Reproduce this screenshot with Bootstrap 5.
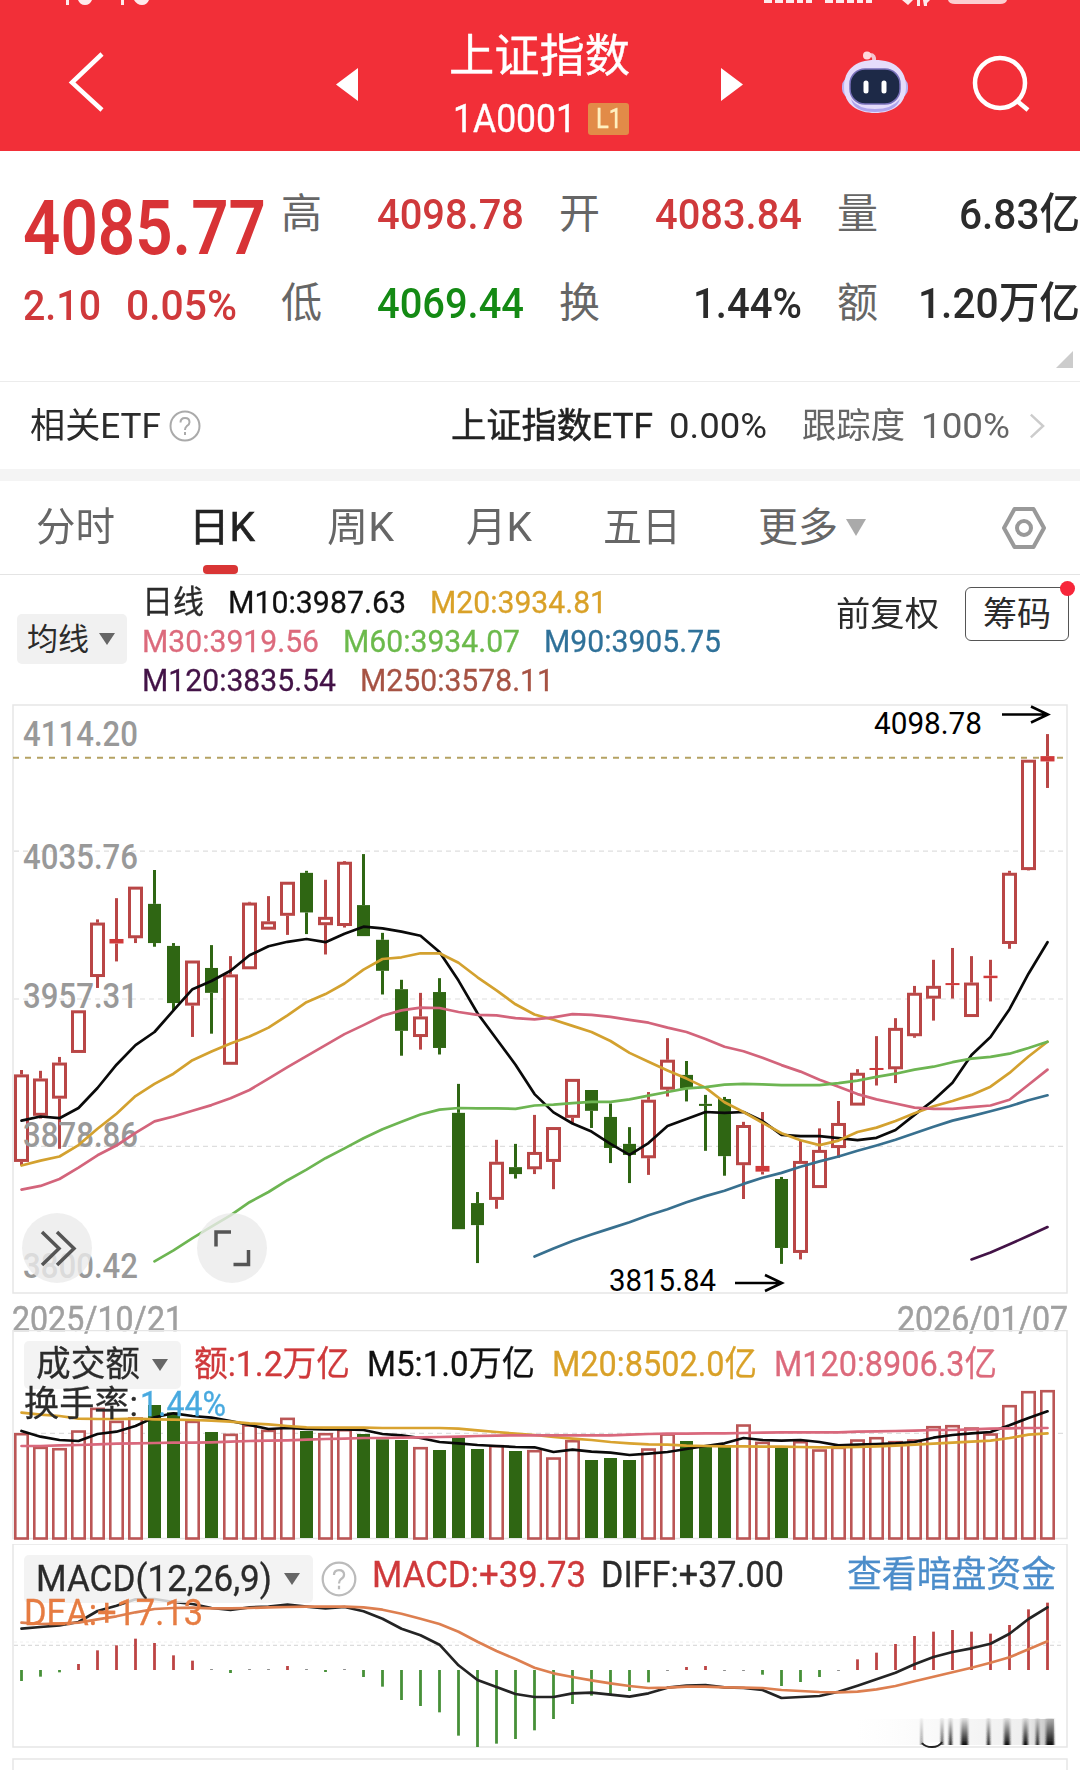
<!DOCTYPE html>
<html lang="zh-CN">
<head>
<meta charset="utf-8">
<meta name="viewport" content="width=device-width, initial-scale=1">
<title>上证指数 1A0001</title>
<link href="https://cdn.jsdelivr.net/npm/bootstrap@5.3.0/dist/css/bootstrap.min.css" rel="stylesheet">
<style>
  body { width:1080px; height:1770px; overflow:hidden; background:#fff; color:#2b2b2b; font-family:Roboto,"Noto Sans CJK SC",sans-serif; line-height:1; }
  svg { display:block; flex:none; }
  .fit { display:inline-block; white-space:nowrap; line-height:1; flex:none; }
  .fit > span { display:inline-block; transform-origin:0 50%; }
  .c-red { color:#cf393b; } .c-green { color:#148a14; } .c-gray { color:#666; }
  .c-gold { color:#d9a128; } .c-pink { color:#dc6a7c; } .c-lime { color:#6cba4c; } .c-blue { color:#2f7199; }
  .c-plum { color:#431347; } .c-brown { color:#a65344; } .c-sky { color:#48a9df; } .c-orange { color:#e67c42; } .c-link { color:#4c8dca; } .c-ink { color:#111; }
  .topbar { height:151px; background:#f22f38; color:#fff; }
  .topbar .titles { left:445px; top:33px; width:190px; }
  .topbar .name { font-size:45px; height:52px; line-height:48px; -webkit-text-stroke:.4px currentColor; }
  .topbar .code { font-size:38px; height:38px; margin-top:15px; gap:12px; -webkit-text-stroke:.4px currentColor; }
  .lv { width:41px; height:32px; border-radius:3px; background:#e28b48; color:#fff0c0; font-size:28px; }
  .quote { height:230px; }
  .lead-col { width:281px; padding-left:23px; }
  .price { font-size:76px; color:#d83336; font-weight:600; height:76px; margin-top:39px; }
  .delta { font-size:43px; font-weight:500; gap:25px; margin-top:18px; height:43px; }
  .grid-col { width:799px; padding-top:35px; }
  .pairs { gap:35px; height:57px; font-size:43px; font-weight:500; }
  .pairs + .pairs { margin-top:32px; }
  .pair { width:243.5px; } .pair .tag { font-size:41px; font-weight:400; color:#666; }
  .corner { right:7px; bottom:13px; border-left:17px solid transparent; border-bottom:17px solid #ccc; }
  .etf { height:88px; border-top:1px solid #ececec; padding-left:30px; padding-top:1px; font-size:35px; }
  .etf .fund { color:#222; -webkit-text-stroke:.5px currentColor; }
  .band { height:12px; background:#f4f4f4; }
  .tabs { height:94px; border-bottom:1px solid #e4e4e4; font-size:40px; color:#666; padding-left:36px; }
  .tabs .active-tab { color:#222; -webkit-text-stroke:.6px currentColor; }
  .tabs .active-tab::after { content:""; position:absolute; left:14px; top:57px; width:35px; height:9px; border-radius:4px; background:#d93535; }
  .cog { margin-right:33px; }
  .tri { display:inline-block; border:8px solid transparent; border-top:12px solid #666; border-bottom:0; flex:none; }
  .tri-lg { border-width:17px 10px 0; border-top-color:#aaa; }
  .legend { height:130px; }
  .pill { background:#f1f1f1; border-radius:5px; }
  .legend .pill { width:110px; height:50px; margin:39px 0 0 17px; font-size:31px; padding-left:10px; gap:10px; }
  .ma { margin:7px 0 0 15px; width:580px; font-size:32px; -webkit-text-stroke:.3px currentColor; } .ma > div { height:39px; gap:24px; }
  .adj { font-size:34px; margin:22px 0 0 114px; }
  .chip { width:104px; height:54px; border:1.5px solid #555; border-radius:6px; margin:12px 0 0 26px; font-size:34px; }
  .chip i { right:-7px; top:-7px; width:15px; height:15px; border-radius:50%; background:#f7263a; }
  .panel-k { height:588px; }
  .dates { height:37px; padding:9px 12px 0 12px; font-size:35px; color:#a0a0a0; -webkit-text-stroke:.5px currentColor; }
  .panel-v { height:214px; } .panel-m { height:216px; }
  .over { position:absolute; left:24px; top:11px; width:1044px; }
  .over .pill { height:48px; background:rgba(240,240,240,.82); }
  .pill-v { width:157px; } .pill-m { width:289px; }
  .panel-v .over { font-size:35px; -webkit-text-stroke:.3px currentColor; } .panel-m .over { font-size:36px; -webkit-text-stroke:.3px currentColor; }
  .second-v { margin-top:-1px; } .second-m { margin-top:-8px; }
  .panel-v .over .fit { position:relative; top:-1px; }
  svg text { font-family:Roboto,"Noto Sans CJK SC",sans-serif; }
</style>
<script src="https://cdn.jsdelivr.net/npm/bootstrap@5.3.0/dist/js/bootstrap.bundle.min.js"></script>
</head>
<body>
<header class="topbar position-relative overflow-hidden">
  <svg width="1080" height="151" viewBox="0 0 1080 151" fill="none">
    <g fill="#fff" opacity=".9">
      <path d="M66 0h3v5h-3zM78 0h14q-2 5-7 5t-7-5M121 0h3v5h-3zM134 0h15q-2 5-7 5t-8-5"/>
      <path d="M764 0h8v3h-8zM775 0h8v3h-8zM786 0h8v3h-8zM797 0h6v3h-6zM806 0h6v3h-6zM825 0h8v3h-8zM836 0h8v3h-8zM847 0h7v3h-7zM857 0h6v3h-6zM866 0h6v3h-6zM902 0h11l-5 5zM917 0h3v6h-3zM923 0h7l-3 3v3h-3z"/>
      <path d="M948 0h59q-1 4-7 4h-45q-6 0-7-4z" opacity=".85"/>
    </g>
    <path d="M102 54 72 82.500 102 110" stroke="#fff" stroke-width="4.500"/>
    <path d="M336 84.500 358 68v33zM743 84.500 721 68v33z" fill="#fff"/>
    <path d="M874 61q1-6-4-6" stroke="#f4c2ce" stroke-width="4"/><circle cx="867" cy="55.500" r="4" fill="#ffd9dc"/>
    <rect x="842" y="77" width="66" height="21" rx="9" fill="#b9b2f2"/>
    <path d="M875 60c20 0 31 10 31 27 0 18-14 26-31 26s-31-8-31-26c0-17 11-27 31-27z" fill="#e5dcfb"/>
    <path d="M851 99q7 10 24 10t25-10q-4 13-25 13t-24-13z" fill="#afa5ed"/>
    <rect x="850" y="69" width="50" height="35" rx="15" fill="#1d2947" stroke="#776fb9" stroke-width="1.500"/>
    <path d="M866 83v8M884 83v8" stroke="#fff" stroke-width="5" stroke-linecap="round"/>
    <circle cx="1000" cy="83" r="25" stroke="#fff" stroke-width="4.500"/><path d="m1017 101 11 9" stroke="#fff" stroke-width="4.500"/>
  </svg>
  <div class="titles position-absolute">
    <div class="name ps-1"><span class="fit" data-w="181">上证指数</span></div>
    <div class="code d-flex align-items-center ps-2"><span class="fit" data-w="123">1A0001</span><span class="lv d-flex align-items-center justify-content-center"><span class="fit" data-w="26">L1</span></span></div>
  </div>
</header>

<section class="quote d-flex position-relative">
  <div class="lead-col flex-shrink-0">
    <div class="price"><span class="fit" data-w="243">4085.77</span></div>
    <div class="delta c-red d-flex"><span class="fit" data-w="78">2.10</span><span class="fit" data-w="111">0.05%</span></div>
  </div>
  <div class="grid-col">
    <div class="pairs d-flex">
      <div class="pair d-flex justify-content-between align-items-center"><span class="tag">高</span><span class="fit c-red" data-w="147">4098.78</span></div>
      <div class="pair d-flex justify-content-between align-items-center"><span class="tag">开</span><span class="fit c-red" data-w="147">4083.84</span></div>
      <div class="pair d-flex justify-content-between align-items-center"><span class="tag">量</span><span class="fit" data-w="121">6.83亿</span></div>
    </div>
    <div class="pairs d-flex">
      <div class="pair d-flex justify-content-between align-items-center"><span class="tag">低</span><span class="fit c-green" data-w="147">4069.44</span></div>
      <div class="pair d-flex justify-content-between align-items-center"><span class="tag">换</span><span class="fit" data-w="109">1.44%</span></div>
      <div class="pair d-flex justify-content-between align-items-center"><span class="tag">额</span><span class="fit" data-w="162">1.20万亿</span></div>
    </div>
  </div>
  <span class="corner position-absolute"></span>
</section>

<section class="etf d-flex align-items-center">
  <span class="fit me-2" data-w="131">相关ETF</span>
  <svg width="32" height="32" viewBox="0 0 32 32" fill="none" stroke="#aaa" stroke-width="2"><circle cx="16" cy="16" r="14.500"/><path d="M11.500 12.500q0-4.500 4.500-4.500t4.500 4.200q0 2.300-2.800 4Q16 17.500 16 20M16 22v3"/></svg>
  <span class="d-flex align-items-center ms-auto pe-4 me-2">
    <span class="fit fund me-3" data-w="202">上证指数ETF</span><span class="fit" data-w="98">0.00%</span>
    <span class="fit c-gray me-3" data-w="103" data-ml="35">跟踪度</span><span class="fit c-gray" data-w="89">100%</span>
    <svg width="22" height="32" class="ms-3 ps-1" viewBox="2 0 22 32" fill="none" stroke="#ccc" stroke-width="3"><path d="m3 2 15 14L3 30"/></svg>
  </span>
</section>
<div class="band"></div>

<nav class="tabs d-flex align-items-center">
  <span class="fit" data-w="79">分时</span>
  <span class="fit active-tab position-relative" data-w="66" data-ml="74">日K</span>
  <span class="fit" data-w="67" data-ml="72">周K</span>
  <span class="fit" data-w="66" data-ml="72">月K</span>
  <span class="fit" data-w="78" data-ml="71">五日</span>
  <span class="fit" data-w="80" data-ml="77">更多</span>
  <span class="tri tri-lg ms-2"></span>
  <svg class="cog ms-auto" width="46" height="44" viewBox="0 0 46 44" fill="none" stroke="#999" stroke-width="4"><path d="M13.500 3h19L43 22 32.500 41h-19L3 22z" stroke-linejoin="round"/><circle cx="23" cy="22" r="7"/></svg>
</nav>

<section class="legend d-flex align-items-start">
  <div class="pill d-flex align-items-center"><span class="fit" data-w="62">均线</span><span class="tri"></span></div>
  <div class="ma">
    <div class="d-flex align-items-center"><span class="fit" data-w="62">日线</span><span class="fit c-ink" data-w="178">M10:3987.63</span><span class="fit c-gold" data-w="177">M20:3934.81</span></div>
    <div class="d-flex align-items-center"><span class="fit c-pink" data-w="177">M30:3919.56</span><span class="fit c-lime" data-w="177">M60:3934.07</span><span class="fit c-blue" data-w="177">M90:3905.75</span></div>
    <div class="d-flex align-items-center"><span class="fit c-plum" data-w="194">M120:3835.54</span><span class="fit c-brown" data-w="194">M250:3578.11</span></div>
  </div>
  <span class="adj fit" data-w="103">前复权</span>
  <div class="chip position-relative d-flex align-items-center justify-content-center"><span class="fit" data-w="68">筹码</span><i class="position-absolute"></i></div>
</section>

<section class="panel-k"><svg id="k" class="overflow-visible" width="1080" height="590" viewBox="0 705 1080 590"></svg></section>
<div class="dates d-flex justify-content-between"><span class="fit" data-w="171">2025/10/21</span><span class="fit" data-w="171">2026/01/07</span></div>

<section class="panel-v position-relative">
  <svg id="v" width="1080" height="214" viewBox="0 1330 1080 214"></svg>
  <div class="over">
    <div class="d-flex align-items-center">
      <div class="pill pill-v d-flex align-items-center ps-2"><span class="fit ms-1 me-2" data-w="104">成交额</span><span class="tri ms-1"></span></div>
      <span class="fit c-red" data-w="156" data-ml="13">额:1.2万亿</span>
      <span class="fit c-ink" data-w="168" data-ml="17">M5:1.0万亿</span>
      <span class="fit c-gold" data-w="205" data-ml="17">M20:8502.0亿</span>
      <span class="fit c-pink" data-w="223" data-ml="17">M120:8906.3亿</span>
    </div>
    <div class="second-v d-flex"><span class="fit" data-w="114">换手率:</span><span class="fit c-sky" data-w="86" data-ml="2">1.44%</span></div>
  </div>
</section>

<section class="panel-m position-relative">
  <svg id="m" width="1080" height="227" viewBox="0 1544 1080 227"></svg>
  <div class="over">
    <div class="d-flex align-items-center">
      <div class="pill pill-m d-flex align-items-center ps-2"><span class="fit ms-1 me-2" data-w="236">MACD(12,26,9)</span><span class="tri ms-1"></span></div>
      <svg class="ms-2" width="36" height="36" viewBox="0 0 32 32" fill="none" stroke="#bbb" stroke-width="2"><circle cx="16" cy="16" r="14.500"/><path d="M11.500 12.500q0-4.500 4.500-4.500t4.500 4.200q0 2.300-2.800 4Q16 17.500 16 20M16 22v3"/></svg>
      <span class="fit c-red pb-2" data-w="214" data-ml="15">MACD:+39.73</span>
      <span class="fit pb-2" data-w="183" data-ml="15">DIFF:+37.00</span>
      <span class="fit c-link pb-2" data-w="209" data-ml="63">查看暗盘资金</span>
    </div>
    <div class="second-m d-flex"><span class="fit c-orange" data-w="179">DEA:+17.13</span></div>
  </div>
</section>

<script>
  document.querySelectorAll('.fit').forEach(function (el) {
    var inner = document.createElement('span');
    while (el.firstChild) inner.appendChild(el.firstChild);
    el.appendChild(inner);
    var w = +el.dataset.w, n = inner.getBoundingClientRect().width;
    inner.style.transform = 'scaleX(' + w / n + ')';
    inner.style.marginRight = (w - n) + 'px';
    if (el.dataset.ml) el.style.setProperty('margin-left', el.dataset.ml + 'px', 'important');
  });

  var RED = '#b94646', GREEN = '#2f6613';
  function X(i) { return 21.5 + 19 * i; }
  function line(a, start, Y, color, w) {
    return '<polyline fill="none" stroke-linecap="round" stroke-linejoin="round" stroke="' + color + '" stroke-width="' + (w || 2.7) + '" points="' +
      a.map(function (v, i) { return X(start + i) + ',' + Y(v).toFixed(1); }).join(' ') + '"/>';
  }
  function seg(x1, y1, x2, y2, c, w, dash) {
    return '<path d="M' + x1 + ' ' + y1 + 'L' + x2 + ' ' + y2 + '" stroke="' + c + '" stroke-width="' + w + '"' + (dash ? ' stroke-dasharray="' + dash + '"' : '') + '/>';
  }
  function frame(y, h) { return '<rect x="13" y="' + y + '" width="1054" height="' + h + '" fill="none" stroke="#e6e6e6" stroke-width="1.500"/>'; }
  function label(x, base, w, size, color, weight, s) {
    return '<text x="' + x + '" y="' + base + '" textLength="' + w + '" lengthAdjust="spacingAndGlyphs" font-size="' + size + '" font-weight="' + weight + '" fill="' + color + '">' + s + '</text>';
  }

  // Daily candles: [up?, high, body top, body bottom, low]
  var K = [
    [1,931,942,1156,1165],[1,933,952,1043,1050],[1,899,913,1001,1124],[1,785,785,889,889],[1,562,570,703,730],[1,510,610,621,665],
    [1,482,482,608,620],[0,441,524,620,629],[0,620,627,767,785],[1,663,663,773,850],[0,625,681,742,842],[1,652,697,918,918],
    [1,519,521,684,684],[1,505,567,587,587],[1,470,470,553,600],[0,443,448,545,598],[1,465,556,576,648],[1,419,421,578,582],
    [0,402,527,603,603],[0,595,612,688,746],[0,710,733,835,896],[1,742,800,850,881],[0,706,740,877,893],[0,965,1036,1321,1321],
    [0,1230,1257,1311,1404],[1,1102,1156,1249,1271],[0,1112,1169,1186,1197],[1,1041,1132,1174,1186],[1,1071,1071,1156,1223],
    [1,953,953,1048,1062],[0,980,980,1031,1073],[0,1013,1046,1122,1159],[0,1071,1112,1139,1208],[1,985,1004,1147,1188],
    [1,853,906,979,996],[0,909,943,976,1008],[0,992,1014,1019,1129],[0,997,1002,1142,1190],[1,1058,1066,1164,1247],
    [1,1034,1166,1180,1187],[0,1193,1198,1367,1406],[1,1105,1154,1379,1395],[1,1074,1127,1220,1220],[1,1007,1061,1122,1146],
    [1,929,938,1018,1018],[1,848,926,931,969],[1,804,828,929,963],[1,725,742,848,852],[1,661,725,756,810],[1,632,718,723,756],
    [1,652,717,801,801],[1,661,700,706,763],[1,443,448,622,634],[1,171,171,441,442],[1,108,162,175,240]];
  var yk = function (v) { return 690 + v / 2.45; }, s = '';
  s += frame(705, 588);
  [395, 757, 1118].forEach(function (g) { s += seg(14, yk(g), 1064, yk(g), '#dedede', 1.2, '5 4'); });
  s += seg(13, yk(166), 1063, yk(166), '#b5a263', 1.8, '6 6');
  var axis = '';
  [['4114.20', 745.5], ['4035.76', 868.8], ['3957.31', 1007.5], ['3878.86', 1147], ['3800.42', 1277.8]].forEach(function (t) { axis += label(23, t[1], 115, 34.5, '#999', 500, t[0]); });
  K.forEach(function (c, i) {
    var x = X(i), t = yk(c[2]), b = yk(c[3]), col = c[0] ? RED : GREEN;
    if (c[1] < c[2]) s += seg(x, yk(c[1]), x, t, col, 3);
    if (c[4] > c[3]) s += seg(x, b, x, yk(c[4]), col, 3);
    if (!c[0]) s += '<rect x="' + (x - 6.5) + '" y="' + t + '" width="13" height="' + (b - t) + '" fill="' + GREEN + '"/>';
    else if (b - t < 7) s += '<rect x="' + (x - 7) + '" y="' + t + '" width="14" height="' + (b - t) + '" fill="#d0393a"/>';
    else s += '<rect x="' + (x - 6) + '" y="' + (t + 1.4) + '" width="12" height="' + (b - t - 2.8) + '" fill="#fff" stroke="' + RED + '" stroke-width="3"/>';
  });
  s += axis;
  s += line([1388,1368,1350,1334,1319,1304,1287,1272,1255,1240,1227,1210,1195,1183,1168,1155,1143,1129,1116,1102,1086,1070,1055,1044,1032,1020,1005,993], 27, yk, '#38708f');
  s += line([1395,1378,1358,1337,1316], 50, yk, '#431347');
  s += line([1055,1045,1049,1024,975,918,870,838,785,733,713,688,650,628,617,610,618,597,580,584,592,602,642,712,792,855,918,990,1035,1062,1082,1112,1139,1110,1068,1051,1034,1036,1034,1056,1090,1093,1093,1098,1103,1097,1078,1041,1005,962,894,850,782,695,618], 0, yk, '#0a0a0a');
  s += line([1165,1153,1143,1115,1075,1038,995,965,940,907,886,866,849,827,797,765,745,719,685,659,655,645,645,668,704,736,770,795,808,823,838,860,889,911,932,952,974,1010,1034,1060,1086,1103,1115,1104,1083,1072,1056,1037,1020,1007,992,972,938,898,862], 0, yk, '#d3a12f');
  s += line([1224,1215,1198,1170,1140,1116,1085,1057,1045,1031,1017,1000,980,952,924,897,870,843,821,798,785,778,779,789,796,797,804,807,802,794,796,801,808,815,827,838,855,874,885,901,919,935,955,972,990,1003,1013,1023,1026,1026,1022,1018,1004,967,930], 0, yk, '#d3647b');
  s += line([1400,1373,1343,1315,1287,1255,1230,1201,1175,1147,1123,1098,1076,1058,1040,1028,1024,1025,1025,1026,1018,1016,1012,1009,1009,1003,994,985,976,973,967,965,966,968,968,968,963,957,948,940,930,923,912,903,899,891,877,862], 7, yk, '#6db552');
  s += label(874, 734, 108, 30.5, '#000', 400, '4098.78') + label(609, 1291, 107, 30.5, '#000', 400, '3815.84');
  s += '<g fill="none" stroke="#000" stroke-width="2.500"><path d="M1002 714.500h46M1031 706.500l17 8-17 8M735 1283h47M765 1275l17 8-17 8"/></g>';
  s += '<g fill="#ebebeb" fill-opacity=".8"><circle cx="57" cy="1248" r="35"/><circle cx="232" cy="1248" r="35"/></g>';
  s += '<g fill="none" stroke="#555" stroke-width="3.500"><path d="m42 1232 17 16.500-17 16.500M57 1232l17 16.500L57 1265M216 1246.500V1232h15M248.500 1250v14.500h-15"/></g>';
  document.getElementById('k').innerHTML = s;

  // Turnover bars; G marks the falling sessions
  var V = [429,470,474,421,353,392,382,345,367,392,426,431,403,419,383,423,429,417,432,448,450,471,480,443,477,465,483,480,502,450,510,504,510,475,430,453,470,470,403,455,474,453,478,470,448,441,453,448,408,405,412,430,345,303,300];
  var G = [7,8,10,15,18,19,20,22,23,24,26,30,31,32,35,36,37,40];
  var yv = function (v) { return 1290 + v / 3; };
  s = frame(1330.5, 208) + seg(14, yv(430), 1064, yv(430), '#dedede', 1.2, '5 4');
  V.forEach(function (v, i) {
    var x = X(i), t = yv(v);
    if (G.indexOf(i) >= 0) s += '<rect x="' + (x - 6.5) + '" y="' + t + '" width="13" height="' + (1538 - t) + '" fill="' + GREEN + '"/>';
    else s += '<rect x="' + (x - 6.2) + '" y="' + (t + 1.2) + '" width="12.400" height="' + (1537.3 - t) + '" fill="#fff" stroke="#bb5656" stroke-width="2.600"/>';
  });
  s += line([423,440,450,453,432,425,408,382,370,378,383,393,405,417,414,417,418,418,420,432,436,444,456,460,465,468,471,472,486,479,485,488,495,491,486,477,468,460,444,450,452,450,456,466,464,462,460,456,443,435,430,426,406,384,364], 0, yv, '#0a0a0a');
  s += line([368,374,378,386,387,387,386,388,389,390,392,395,400,403,408,412,413,413,413,414,414,414,414,416,421,426,431,435,441,446,450,456,460,463,464,467,468,469,469,470,470,471,472,472,471,469,467,464,461,458,455,452,444,434,430], 0, yv, '#d9a330');
  s += line([468,468,466,465,463,461,460,459,458,458,457,455,453,452,451,449,447,446,444,444,443,442,441,440,438,437,436,436,436,436,436,436,434,432,431,431,430,430,429,428,427,427,427,427,425,424,423,422,420,420,418,416,415,414,414], 0, yv, '#d9687c');
  document.getElementById('v').innerHTML = s;

  // MACD histogram ends, measured from the zero line at 390
  var H = [423,410,397,372,331,316,296,309,346,362,388,399,388,388,378,388,396,388,411,440,480,498,517,587,621,611,597,571,537,492,467,462,453,427,392,381,378,392,392,404,438,426,411,392,358,338,312,288,275,270,275,281,255,208,188];
  var ym = function (v) { return 1540 + v / 3; };
  s = frame(1544, 203) + frame(1759, 40) + seg(14, ym(316), 1064, ym(316), '#dcdcdc', 1.2, '4 3') + seg(14, ym(306), 1064, ym(306), '#f0f0f0', 1, '3 3');
  H.forEach(function (v, i) { s += seg(X(i), ym(390), X(i), ym(v), Math.abs(v - 390) < 3 ? '#555' : v < 390 ? '#bd4444' : '#479038', 2.8); });
  s += line([266,261,256,246,213,197,178,177,186,192,204,210,202,200,194,200,205,201,214,236,266,286,314,376,420,441,462,471,471,460,458,464,470,460,443,437,435,442,444,450,474,471,468,455,437,418,398,373,351,336,325,311,281,237,202], 0, ym, '#242424');
  s += line([248,252,251,248,238,229,217,207,204,203,205,205,204,202,201,200,200,200,202,209,221,236,252,275,305,333,357,383,400,411,421,430,438,444,443,440,440,442,443,444,450,453,456,457,455,448,438,424,410,397,383,368,352,328,304], 0, ym, '#dd7f50');
  // Faded strip in the lower right corner
  s += '<defs><linearGradient id="fade"><stop offset="0" stop-color="#eee" stop-opacity="0"/><stop offset=".85" stop-color="#ddd" stop-opacity=".5"/><stop offset="1" stop-color="#999" stop-opacity=".7"/></linearGradient><linearGradient id="ink" x2="0" y2="1"><stop offset="0" stop-color="#222" stop-opacity=".1"/><stop offset="1" stop-color="#111"/></linearGradient><filter id="soft"><feGaussianBlur stdDeviation="1.2 .5"/></filter></defs>';
  s += '<rect x="856" y="1719" width="198" height="26" fill="url(#fade)"/><g fill="url(#ink)" filter="url(#soft)">';
  [[921,1],[941,2],[949,3],[961,7],[987,3],[1004,6],[1023,5],[1036,3],[1046,8]].forEach(function (b) { s += '<rect x="' + b[0] + '" y="1718" width="' + b[1] + '" height="27"/>'; });
  s += '</g><path d="M922 1743q3 4 10 4t10-5" fill="#fff" stroke="#222" stroke-width="2"/>';
  document.getElementById('m').innerHTML = s;
</script>
</body>
</html>
